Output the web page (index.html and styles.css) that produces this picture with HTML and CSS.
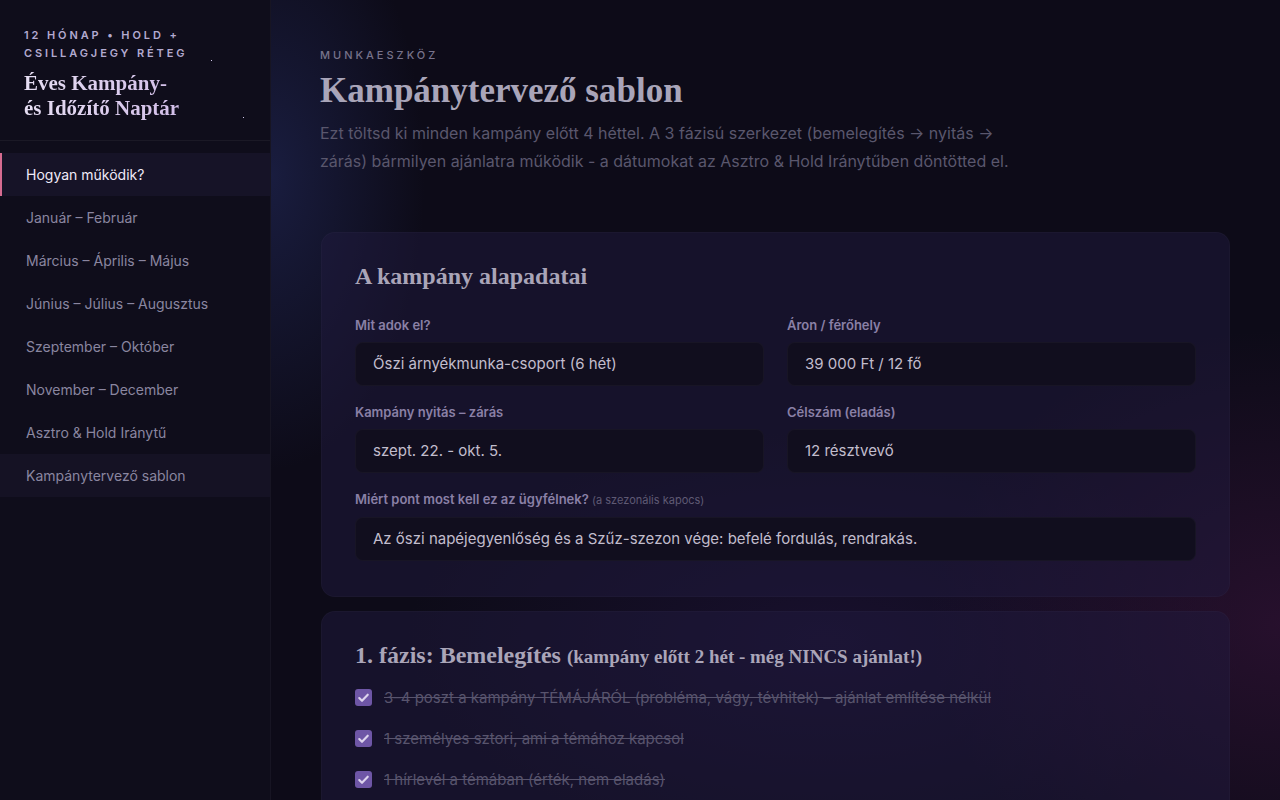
FILE: index.html
```html
<!DOCTYPE html>
<html lang="hu">

<head>
    <meta charset="UTF-8">
    <meta name="viewport" content="width=device-width, initial-scale=1.0">
    <title>Éves Kampány- és Időzítő Naptár</title>
    <link rel="stylesheet" href="styles.css">
</head>

<body>
    <div class="layout">
        <aside class="sidebar">
            <div class="brand">
                <span class="star star-a"></span>
                <span class="star star-b"></span>
                <div class="brand-eyebrow">12 hónap • Hold +<br>csillagjegy réteg</div>
                <div class="brand-title">Éves Kampány-<br>és Időzítő Naptár</div>
            </div>

            <nav class="nav">
                <a class="nav-item active">Hogyan működik?</a>
                <a class="nav-item">Január – Február</a>
                <a class="nav-item">Március – Április – Május</a>
                <a class="nav-item">Június – Július – Augusztus</a>
                <a class="nav-item">Szeptember – Október</a>
                <a class="nav-item">November – December</a>
                <a class="nav-item">Asztro &amp; Hold Iránytű</a>
                <a class="nav-item hover">Kampánytervező sablon</a>
            </nav>
        </aside>

        <main class="main">
            <div class="eyebrow">Munkaeszköz</div>
            <h1>Kampánytervező sablon</h1>
            <p class="lead">Ezt töltsd ki minden kampány előtt 4 héttel. A 3 fázisú szerkezet (bemelegítés → nyitás → zárás) bármilyen ajánlatra működik - a dátumokat az Asztro &amp; Hold Iránytűben döntötted el.</p>

            <section class="card">
                <h2>A kampány alapadatai</h2>
                <div class="form-grid">
                    <div class="field">
                        <label>Mit adok el?</label>
                        <div class="input">Őszi árnyékmunka-csoport (6 hét)</div>
                    </div>
                    <div class="field">
                        <label>Áron / férőhely</label>
                        <div class="input">39 000 Ft / 12 fő</div>
                    </div>
                    <div class="field">
                        <label>Kampány nyitás – zárás</label>
                        <div class="input">szept. 22. - okt. 5.</div>
                    </div>
                    <div class="field">
                        <label>Célszám (eladás)</label>
                        <div class="input">12 résztvevő</div>
                    </div>
                    <div class="field full">
                        <label>Miért pont most kell ez az ügyfélnek? <small>(a szezonális kapocs)</small></label>
                        <div class="input">Az őszi napéjegyenlőség és a Szűz-szezon vége: befelé fordulás, rendrakás.</div>
                    </div>
                </div>
            </section>

            <section class="card">
                <h2>1. fázis: Bemelegítés <small>(kampány előtt 2 hét - még NINCS ajánlat!)</small></h2>
                <ul class="checklist">
                    <li class="done"><span class="box"><svg viewBox="0 0 16 16"><path d="M4 8.5l2.6 2.6L12 5.4" /></svg></span>3–4 poszt a kampány TÉMÁJÁRÓL (probléma, vágy, tévhitek) – ajánlat említése nélkül</li>
                    <li class="done"><span class="box"><svg viewBox="0 0 16 16"><path d="M4 8.5l2.6 2.6L12 5.4" /></svg></span>1 személyes sztori, ami a témához kapcsol</li>
                    <li class="done"><span class="box"><svg viewBox="0 0 16 16"><path d="M4 8.5l2.6 2.6L12 5.4" /></svg></span>1 hírlevél a témában (érték, nem eladás)</li>
                </ul>
            </section>
        </main>
    </div>
</body>

</html>
```

FILE: styles.css
```css
* {
    margin: 0;
    padding: 0;
    box-sizing: border-box;
}

body {
    background: #0d0b18;
    font-family: "Inter", "Noto Sans", sans-serif;
    height: 100vh;
    overflow: hidden;
}

.layout {
    display: flex;
    height: 100vh;
}

/* sidebar */

.sidebar {
    width: 271px;
    flex-shrink: 0;
    background: #0f0d1b;
    border-right: 1px solid rgba(255, 255, 255, 0.035);
}

.brand {
    position: relative;
    padding: 26px 24px 19px;
    border-bottom: 1px solid rgba(255, 255, 255, 0.05);
    margin-bottom: 12px;
}

.star {
    position: absolute;
    width: 1px;
    height: 1px;
    background: #cfc6ea;
}

.star-a {
    left: 211px;
    top: 60px;
}

.star-b {
    left: 243px;
    top: 117px;
}

.brand-eyebrow {
    font-size: 11px;
    font-weight: 600;
    letter-spacing: 2.9px;
    line-height: 18px;
    text-transform: uppercase;
    color: #b3aad0;
}

.brand-title {
    margin-top: 9px;
    font-family: "Liberation Serif", serif;
    font-weight: 700;
    font-size: 21px;
    line-height: 25px;
    background: linear-gradient(90deg, #e6def3, #c9b0e4);
    -webkit-background-clip: text;
    background-clip: text;
    color: transparent;
}

.nav {
    display: flex;
    flex-direction: column;
}

.nav-item {
    display: block;
    height: 43px;
    line-height: 43px;
    padding-left: 24px;
    font-size: 14px;
    color: #8a86a0;
    border-left: 2px solid transparent;
}

.nav-item.active {
    color: #efeaf7;
    background: #161327;
    border-left-color: #d66b90;
}

.nav-item.hover {
    background: #151224;
}

/* main */

.main {
    flex: 1;
    padding: 48px 50px 0 49px;
    background:
        radial-gradient(ellipse 220px 420px at 0% 22%, rgba(40, 50, 110, 0.45), transparent 70%),
        radial-gradient(ellipse 500px 420px at 100% 78%, rgba(70, 22, 70, 0.45), transparent 70%),
        radial-gradient(ellipse 600px 300px at 55% 80%, rgba(45, 25, 85, 0.35), transparent 70%),
        #0d0b18;
}

.eyebrow {
    font-size: 11px;
    font-weight: 500;
    letter-spacing: 3px;
    text-transform: uppercase;
    color: #77738b;
}

h1 {
    margin-top: 8px;
    font-family: "Liberation Serif", serif;
    font-size: 35px;
    line-height: 42px;
    font-weight: 700;
    color: #a9a5b9;
}

.lead {
    margin-top: 7px;
    max-width: 710px;
    font-size: 16px;
    line-height: 28px;
    color: #5a576d;
}

.card {
    margin-top: 57px;
    margin-left: 1px;
    width: 909px;
    padding: 28px 33px 35px;
    background: rgba(32, 26, 62, 0.5);
    border: 1px solid rgba(255, 255, 255, 0.025);
    border-radius: 14px;
}

.card + .card {
    margin-top: 14px;
    padding-top: 28px;
}

h2 {
    font-family: "Liberation Serif", serif;
    font-size: 24px;
    line-height: 30px;
    font-weight: 700;
    color: #aaa5b8;
}

h2 small {
    font-size: 19px;
}

.form-grid {
    margin-top: 25px;
    display: grid;
    grid-template-columns: 1fr 1fr;
    column-gap: 23px;
    row-gap: 17px;
}

.field.full {
    grid-column: 1 / -1;
}

.field label {
    display: block;
    font-size: 13px;
    font-weight: 600;
    line-height: 18px;
    color: #8a80a6;
    margin-bottom: 8px;
}

.field label small {
    font-size: 11px;
    font-weight: 400;
    color: #5f5a74;
}

.input {
    height: 44px;
    line-height: 42px;
    padding: 0 17px;
    background: #110e1e;
    border: 1px solid rgba(255, 255, 255, 0.03);
    border-radius: 8px;
    font-size: 15px;
    color: #c2bdcd;
}

.checklist {
    list-style: none;
    margin-top: 5px;
}

.checklist li {
    display: flex;
    align-items: center;
    gap: 12px;
    height: 41px;
    font-size: 15px;
    color: #58546d;
    text-decoration: line-through;
}

.box {
    width: 17px;
    height: 17px;
    border-radius: 3px;
    background: #6e56a6;
    flex-shrink: 0;
    display: flex;
}

.box svg {
    width: 17px;
    height: 17px;
    fill: none;
    stroke: #ddd4ee;
    stroke-width: 2;
    stroke-linecap: round;
    stroke-linejoin: round;
}
```
